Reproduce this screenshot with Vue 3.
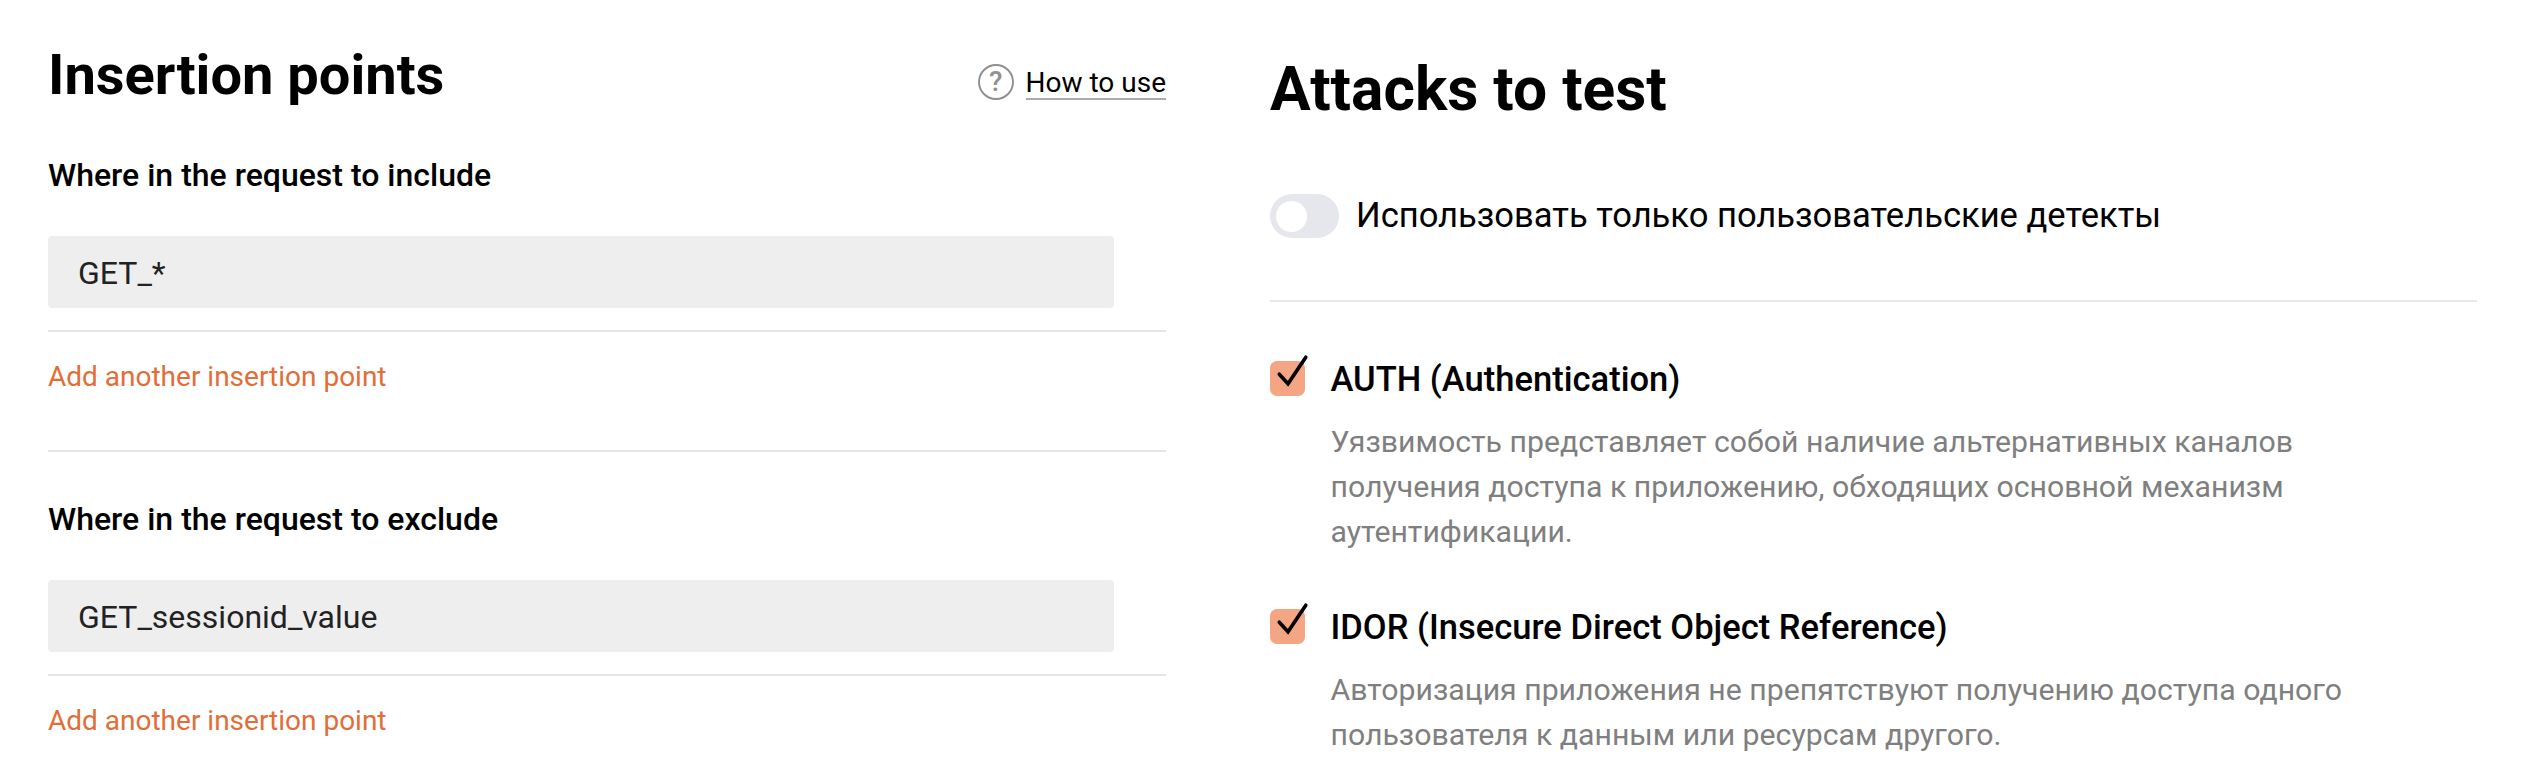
<script setup>
import { ref } from 'vue'

const sections = [
  { title: 'Where in the request to include', value: 'GET_*' },
  { title: 'Where in the request to exclude', value: 'GET_sessionid_value' },
]

const customOnly = ref(false)

const attacks = ref([
  {
    name: 'AUTH (Authentication)',
    checked: true,
    lines: [
      'Уязвимость представляет собой наличие альтернативных каналов',
      'получения доступа к приложению, обходящих основной механизм',
      'аутентификации.',
    ],
  },
  {
    name: 'IDOR (Insecure Direct Object Reference)',
    checked: true,
    lines: [
      'Авторизация приложения не препятствуют получению доступа одного',
      'пользователя к данным или ресурсам другого.',
    ],
  },
])
</script>

<template>
  <main class="page">
    <section class="points">
      <header class="points-head">
        <h1 class="points-title">Insertion points</h1>
        <a class="help">
          <svg class="help-icon" width="36" height="36" viewBox="0 0 36 36">
            <circle cx="18" cy="18" r="17" fill="none" stroke="#8f8f8f" stroke-width="1.9" />
            <text class="help-mark" x="17.7" y="27.4" text-anchor="middle">?</text>
          </svg>
          <span class="help-text">How to use</span>
        </a>
      </header>

      <div v-for="section in sections" :key="section.title" class="group">
        <h2 class="group-title">{{ section.title }}</h2>
        <div class="field">{{ section.value }}</div>
        <div class="group-foot">
          <a class="add">Add another insertion point</a>
        </div>
      </div>
    </section>

    <section class="attacks">
      <h1 class="attacks-title">Attacks to test</h1>
      <div class="switch-row">
        <span class="switch" :class="{ on: customOnly }" @click="customOnly = !customOnly">
          <span class="knob"></span>
        </span>
        <span class="switch-label">Использовать только пользовательские детекты</span>
      </div>

      <ul class="list">
        <li v-for="attack in attacks" :key="attack.name" class="item">
          <span class="box" @click="attack.checked = !attack.checked">
            <svg v-if="attack.checked" class="tick" width="35" height="35" viewBox="0 0 35 35">
              <path d="M9.3 13.2 L18 22.8 L35.8 -3.8" fill="none" stroke="#000" stroke-width="3.6" stroke-linecap="round" />
            </svg>
          </span>
          <div class="info">
            <h3 class="name">{{ attack.name }}</h3>
            <p class="desc">
              <span v-for="line in attack.lines" :key="line" class="desc-line">{{ line }}</span>
            </p>
          </div>
        </li>
      </ul>
    </section>
  </main>
</template>

<style scoped>
.page {
  display: flex;
  width: 2531px;
  height: 784px;
  overflow: hidden;
  box-sizing: border-box;
  padding-left: 48px;
  background: #fff;
  color: #000;
  font-family: Roboto, "Liberation Sans", sans-serif;
}
h1, h2, h3, p, ul {
  margin: 0;
  padding: 0;
}
.points {
  width: 1118px;
  padding-top: 42px;
}
.points-head {
  display: flex;
  justify-content: space-between;
  height: 66px;
}
.points-title {
  font-size: 56px;
  line-height: 66px;
  font-weight: 700;
}
.help {
  display: flex;
  align-items: flex-start;
  gap: 11.5px;
  padding-top: 22px;
}
.help-icon {
  display: block;
}
.help-mark {
  font-size: 27.5px;
  font-weight: 500;
  fill: #919191;
}
.help-text {
  height: 32px;
  margin-top: 2px;
  font-size: 28px;
  line-height: 33px;
  border-bottom: 2px solid #acacac;
}
.group {
  padding-top: 48px;
}
.group + .group {
  margin-top: 57px;
  border-top: 2px solid #e6e6e6;
}
.group-title {
  font-size: 32px;
  line-height: 38px;
  font-weight: 500;
}
.field {
  width: 1066px;
  height: 72px;
  margin-top: 42px;
  box-sizing: border-box;
  padding: 18px 30px 16px;
  border-radius: 4px;
  background: #eee;
  color: #222;
  font-size: 32px;
  line-height: 38px;
}
.group-foot {
  margin-top: 22px;
  padding-top: 28px;
  border-top: 2px solid #e6e6e6;
}
.add {
  display: block;
  color: #e26e37;
  font-size: 28px;
  line-height: 33px;
}
.attacks {
  width: 1207px;
  margin-left: 104px;
  padding-top: 54px;
}
.attacks-title {
  font-size: 60.48px;
  line-height: 71px;
  font-weight: 700;
}
.switch-row {
  display: flex;
  align-items: flex-start;
  gap: 17px;
  margin-top: 69px;
  height: 106px;
  border-bottom: 2px solid #e8e8e8;
}
.switch {
  display: flex;
  width: 69px;
  height: 44px;
  box-sizing: border-box;
  padding: 6.5px 6px;
  border-radius: 22px;
  background: #e6e7ec;
}
.switch.on {
  justify-content: flex-end;
  background: #f4a583;
}
.knob {
  width: 31px;
  height: 31px;
  border-radius: 50%;
  background: #fff;
}
.switch-label {
  margin-top: 1px;
  font-size: 34.56px;
  line-height: 40px;
}
.list {
  display: flex;
  flex-direction: column;
  gap: 53px;
  padding-top: 57px;
  list-style: none;
}
.item {
  display: flex;
  gap: 25.5px;
}
.box {
  flex: none;
  width: 35px;
  height: 35px;
  margin-top: 2px;
  border-radius: 7px;
  background: #f4a583;
}
.tick {
  display: block;
  overflow: visible;
}
.name {
  font-size: 34.56px;
  line-height: 40px;
  font-weight: 500;
}
.desc {
  margin-top: 20px;
  color: #7f7f7f;
  font-size: 30.24px;
  line-height: 45px;
}
.desc-line {
  display: block;
  white-space: nowrap;
}
</style>

<style>
body {
  margin: 0;
  background: #fff;
}
</style>
